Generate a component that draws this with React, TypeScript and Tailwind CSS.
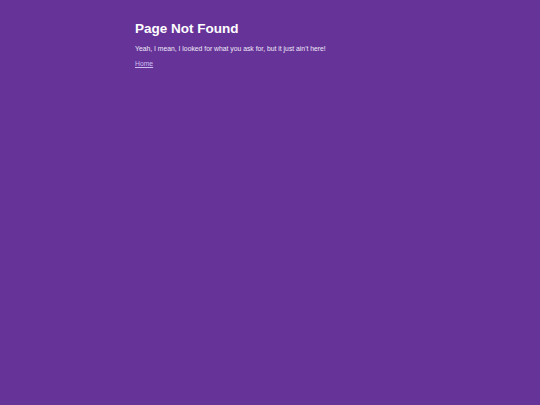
export default function App() {
  return (
    <div className="min-h-screen w-full bg-[#663399] text-white font-['Liberation_Sans',Arial,sans-serif]">
      <div className="mx-auto w-1/2 pt-[20px]">
        <h1 className="text-[13.5px] font-bold leading-[17px]">Page Not Found</h1>
        <p className="mt-[7px] text-[6.8px] leading-[9px] text-[#f0eaf8]">
          Yeah, I mean, I looked for what you ask for, but it just ain't here!
        </p>
        <a href="#" className="mt-[6px] block text-[6.8px] leading-[9px] text-[#cdbdf0] underline">
          Home
        </a>
      </div>
    </div>
  );
}
